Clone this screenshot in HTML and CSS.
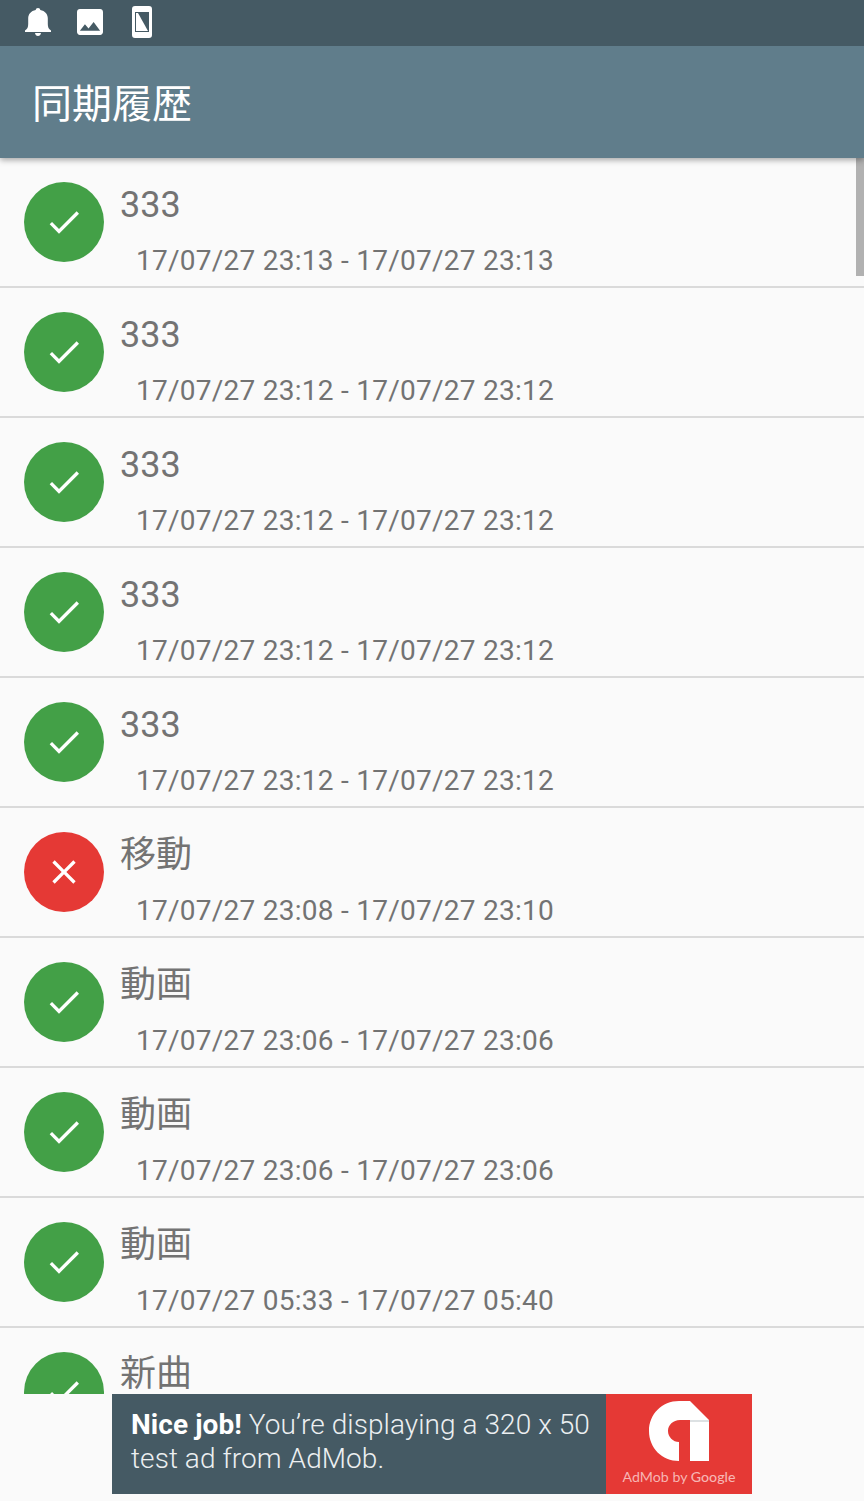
FILE: index.html
```
<!DOCTYPE html>
<html lang="ja">
<head>
    <meta charset="UTF-8">
    <meta name="viewport" content="width=device-width, initial-scale=1.0">
    <title>同期履歴</title>
    <link rel="stylesheet" href="styles.css">
</head>
<body>
    <svg class="symbols">
        <symbol id="check" viewBox="0 0 24 24">
            <path d="M9 16.17L4.83 12l-1.42 1.41L9 19 21 7l-1.41-1.41z"/>
        </symbol>
        <symbol id="close" viewBox="0 0 24 24">
            <path d="M19 6.41L17.59 5 12 10.59 6.41 5 5 6.41 10.59 12 5 17.59 6.41 19 12 13.41 17.59 19 19 17.59 13.41 12z"/>
        </symbol>
    </svg>

    <div class="status-bar">
        <svg width="26" height="28" viewBox="0 0 26 28">
            <path d="M13 0c-1.400 0-2.200.8-2.300 1.900C6 2.700 3.200 6 3.200 10.300V16c0 3-.8 5.200-3.200 6.500V24h26v-1.500c-2.400-1.300-3.200-3.500-3.200-6.500v-5.700c0-4.300-2.800-7.600-7.500-8.400C15.200.8 14.400 0 13 0zM10 25c.3 1.800 1.400 3 3 3s2.700-1.200 3-3z"/>
        </svg>
        <svg width="26" height="26" viewBox="3 3 18 18">
            <path d="M21 19V5c0-1.100-.9-2-2-2H5c-1.100 0-2 .9-2 2v14c0 1.100.9 2 2 2h14c1.100 0 2-.9 2-2zM8.500 13.500l2.500 3.010L14.500 12l4.500 6H5l3.500-4.500z"/>
        </svg>
        <svg width="20" height="32" viewBox="0 0 20 32">
            <path fill-rule="evenodd" d="M3 0h14a3 3 0 0 1 3 3v26a3 3 0 0 1-3 3H3a3 3 0 0 1-3-3V3a3 3 0 0 1 3-3zM3 6v20h14V6z"/>
            <path d="M4 7h2l10 18H4z"/>
        </svg>
    </div>

    <header>
        <h1>同期履歴</h1>
    </header>

    <div class="history">
        <div class="scrollbar"></div>
        <div class="item">
            <div class="icon success"><svg><use href="#check"/></svg></div>
            <div class="info">
                <div class="name">333</div>
                <div class="time">17/07/27 23:13 - 17/07/27 23:13</div>
            </div>
        </div>
        <div class="item">
            <div class="icon success"><svg><use href="#check"/></svg></div>
            <div class="info">
                <div class="name">333</div>
                <div class="time">17/07/27 23:12 - 17/07/27 23:12</div>
            </div>
        </div>
        <div class="item">
            <div class="icon success"><svg><use href="#check"/></svg></div>
            <div class="info">
                <div class="name">333</div>
                <div class="time">17/07/27 23:12 - 17/07/27 23:12</div>
            </div>
        </div>
        <div class="item">
            <div class="icon success"><svg><use href="#check"/></svg></div>
            <div class="info">
                <div class="name">333</div>
                <div class="time">17/07/27 23:12 - 17/07/27 23:12</div>
            </div>
        </div>
        <div class="item">
            <div class="icon success"><svg><use href="#check"/></svg></div>
            <div class="info">
                <div class="name">333</div>
                <div class="time">17/07/27 23:12 - 17/07/27 23:12</div>
            </div>
        </div>
        <div class="item">
            <div class="icon error"><svg><use href="#close"/></svg></div>
            <div class="info">
                <div class="name">移動</div>
                <div class="time">17/07/27 23:08 - 17/07/27 23:10</div>
            </div>
        </div>
        <div class="item">
            <div class="icon success"><svg><use href="#check"/></svg></div>
            <div class="info">
                <div class="name">動画</div>
                <div class="time">17/07/27 23:06 - 17/07/27 23:06</div>
            </div>
        </div>
        <div class="item">
            <div class="icon success"><svg><use href="#check"/></svg></div>
            <div class="info">
                <div class="name">動画</div>
                <div class="time">17/07/27 23:06 - 17/07/27 23:06</div>
            </div>
        </div>
        <div class="item">
            <div class="icon success"><svg><use href="#check"/></svg></div>
            <div class="info">
                <div class="name">動画</div>
                <div class="time">17/07/27 05:33 - 17/07/27 05:40</div>
            </div>
        </div>
        <div class="item">
            <div class="icon success"><svg><use href="#check"/></svg></div>
            <div class="info">
                <div class="name">新曲</div>
            </div>
        </div>
    </div>

    <div class="ad">
        <p class="ad-text"><b>Nice job!</b> You’re displaying a 320 x 50<br>test ad from AdMob.</p>
        <div class="ad-logo">
            <svg width="60" height="60" viewBox="0 0 60 60">
                <path d="M30 0h11l19 19v41H41V19H31c-7 0-12 5-12 11s5 11 11 11v19C13 60 0 47 0 30S13 0 30 0z"/>
                <path class="fold" d="M41 19h19v2H41z"/>
            </svg>
            <span>AdMob by <b>Google</b></span>
        </div>
    </div>
</body>
</html>
```
FILE: styles.css
```
/* 基本スタイル */
* {
    box-sizing: border-box;
}

body {
    display: flex;
    flex-direction: column;
    height: 1501px;
    margin: 0;
    overflow: hidden;
    background-color: #fafafa;
    color: #737373;
    font-family: Roboto, "Noto Sans CJK JP", sans-serif;
}

svg {
    display: block;
    fill: white;
}

.symbols {
    display: none;
}

/* ステータスバー */
.status-bar {
    z-index: 2;
    display: flex;
    align-items: center;
    height: 46px;
    padding: 0 25px 2px;
    background-color: #455a64;
}

.status-bar svg {
    margin-right: 26px;
}

.status-bar svg:nth-child(2) {
    margin-right: 29px;
}

header {
    z-index: 1;
    display: flex;
    align-items: center;
    height: 112px;
    padding: 6px 32px 0;
    background-color: #607d8b;
    box-shadow: 0 2px 6px rgba(0, 0, 0, 0.35);
}

h1 {
    margin: 0;
    color: white;
    font-size: 40px;
    font-weight: 400;
    line-height: 60px;
}

/* 履歴リスト */
.history {
    position: relative;
    height: 1236px;
    overflow: hidden;
}

.scrollbar {
    position: absolute;
    top: 0;
    right: 0;
    width: 8px;
    height: 118px;
    background-color: #b1b1b1;
}

.item {
    display: flex;
    height: 130px;
    padding: 24px 24px 0;
    border-bottom: 2px solid #dadada;
}

.icon {
    display: flex;
    align-items: center;
    justify-content: center;
    width: 80px;
    height: 80px;
    border-radius: 50%;
}

.icon svg {
    width: 40px;
    height: 40px;
}

.success {
    background-color: #43a047;
}

.error {
    background-color: #e53935;
}

.info {
    margin-left: 16px;
}

.name {
    height: 57px;
    font-size: 36px;
    line-height: 46px;
}

.item:last-child .name {
    line-height: 45px;
}

.time {
    margin-left: 16px;
    font-size: 28px;
    letter-spacing: 0.26px;
    line-height: 44px;
}

/* 広告 */
.ad {
    display: flex;
    width: 640px;
    height: 100px;
    margin: 0 auto;
    background-color: #455a64;
}

.ad-text {
    width: 494px;
    margin: 0;
    padding: 14px 0 0 19px;
    color: #eceff1;
    font-size: 28px;
    font-weight: 300;
    letter-spacing: 0.07px;
    line-height: 34px;
    white-space: nowrap;
}

.ad-text b {
    color: white;
    font-weight: 700;
}

.ad-logo {
    display: flex;
    flex-direction: column;
    align-items: center;
    width: 146px;
    padding-top: 7px;
    background-color: #e53935;
    color: #f7b5b3;
    font-family: Lato, sans-serif;
    font-size: 14.2px;
    line-height: 20px;
    white-space: nowrap;
}

.ad-logo b {
    font-weight: 500;
}

.ad-logo span {
    margin-top: 6px;
}

.fold {
    fill: #dde1e3;
}
```
